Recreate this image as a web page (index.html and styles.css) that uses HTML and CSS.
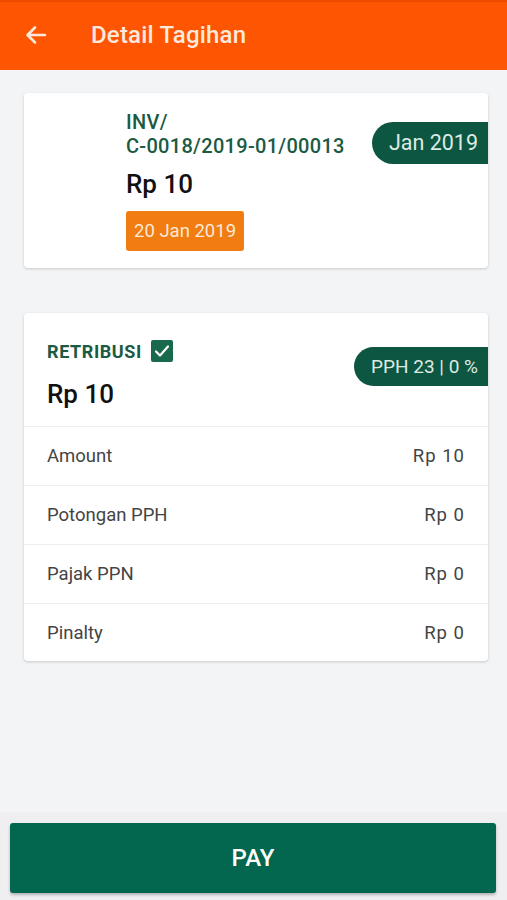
FILE: index.html
```html
<!DOCTYPE html>
<html lang="id">
<head>
    <meta charset="UTF-8">
    <meta name="viewport" content="width=device-width, initial-scale=1.0">
    <title>Detail Tagihan</title>
    <link rel="stylesheet" href="styles.css">
</head>
<body>
    <header class="app-bar">
        <svg class="back" width="22" height="20" viewBox="0 0 22 20">
            <path d="M20 10H3M10 2.5L2.5 10L10 17.5" fill="none" stroke="#fde9dc" stroke-width="2.6" stroke-linecap="round" stroke-linejoin="round"/>
        </svg>
        <h1>Detail Tagihan</h1>
    </header>

    <main class="content">
        <div class="card invoice-card">
            <div class="invoice-info">
                <div class="invoice-no">INV/<br>C-0018/2019-01/00013</div>
                <div class="amount">Rp 10</div>
                <span class="due-badge">20 Jan 2019</span>
            </div>
            <span class="pill period-pill">Jan 2019</span>
        </div>

        <div class="card detail-card">
            <div class="detail-head">
                <div>
                    <div class="type-row">
                        <span class="type-label">RETRIBUSI</span>
                        <span class="check">
                            <svg width="16" height="14" viewBox="0 0 16 14">
                                <path d="M2 7.5L6 11.5L14 2.5" fill="none" stroke="#fff" stroke-width="2.2" stroke-linecap="round" stroke-linejoin="round"/>
                            </svg>
                        </span>
                    </div>
                    <div class="amount">Rp 10</div>
                </div>
                <span class="pill tax-pill">PPH 23 | 0 %</span>
            </div>
            <div class="detail-row"><span>Amount</span><span class="value">Rp 10</span></div>
            <div class="detail-row"><span>Potongan PPH</span><span class="value">Rp 0</span></div>
            <div class="detail-row"><span>Pajak PPN</span><span class="value">Rp 0</span></div>
            <div class="detail-row"><span>Pinalty</span><span class="value">Rp 0</span></div>
        </div>
    </main>

    <footer class="bottom-bar">
        <button class="pay-btn">PAY</button>
    </footer>
</body>
</html>
```

FILE: styles.css
```css
body {
    margin: 0;
    font-family: Roboto, 'Noto Sans', sans-serif;
    background-color: #f2f4f5;
    width: 507px;
    height: 900px;
    display: flex;
    flex-direction: column;
    overflow: hidden;
}
.app-bar {
    height: 70px;
    background-color: #fe5502; /* Orange */
    display: flex;
    align-items: center;
    padding-left: 25px;
    box-sizing: border-box;
    border-top: 2px solid #f04a00;
}
.back {
    margin-top: -3px;
}
.app-bar h1 {
    margin: -3px 0 0 44px;
    font-size: 24px;
    font-weight: 500;
    letter-spacing: 0.2px;
    color: #fde9dc;
}
.content {
    flex: 1;
    padding: 23px 19px 0 24px;
    display: flex;
    flex-direction: column;
    gap: 45px;
}
.card {
    background-color: #fff;
    border-radius: 4px;
    box-shadow: 0 1px 3px rgba(0, 0, 0, 0.18);
    overflow: hidden;
}
.invoice-card {
    height: 175px;
    box-sizing: border-box;
    display: flex;
    justify-content: space-between;
    align-items: flex-start;
    padding: 17px 0 0 102px;
}
.invoice-info {
    display: flex;
    flex-direction: column;
    align-items: flex-start;
}
.invoice-no {
    font-size: 20px;
    font-weight: 500;
    letter-spacing: 0.3px;
    color: #1c5a43; /* Dark Green */
    line-height: 24px;
}
.amount {
    font-size: 26px;
    font-weight: 500;
    color: #111;
    margin-top: 11px;
    line-height: 30px;
}
.due-badge {
    margin-top: 12px;
    background-color: #f07c12;
    color: #fde9d6;
    font-size: 18.5px;
    padding: 0 8px;
    height: 40px;
    line-height: 40px;
    border-radius: 3px;
}
.pill {
    background-color: #0d5641;
    color: #dcebe4;
    border-radius: 22px 0 0 22px;
    white-space: nowrap;
}
.period-pill {
    margin-top: 12px;
    height: 42px;
    line-height: 42px;
    font-size: 21.5px;
    padding: 0 10px 0 17px;
}
.detail-head {
    display: flex;
    justify-content: space-between;
    align-items: flex-start;
    padding: 27px 0 17px 23px;
    border-bottom: 1px solid #eeeeee;
}
.type-row {
    display: flex;
    align-items: center;
    gap: 9px;
}
.type-label {
    font-size: 18px;
    font-weight: 700;
    letter-spacing: 0.6px;
    color: #1c5a43;
}
.check {
    width: 22px;
    height: 22px;
    border-radius: 2px;
    background-color: #196a4d;
    display: flex;
    align-items: center;
    justify-content: center;
}
.detail-head .amount {
    margin-top: 17px;
}
.tax-pill {
    margin-top: 7px;
    height: 39px;
    line-height: 39px;
    font-size: 19px;
    padding: 0 10px 0 17px;
}
.detail-row {
    display: flex;
    justify-content: space-between;
    align-items: center;
    height: 58px;
    padding: 0 24px 0 23px;
    font-size: 18.5px;
    color: #444;
    border-bottom: 1px solid #eeeeee;
}
.detail-row:last-child {
    border-bottom: none;
    height: 57px;
}
.value {
    letter-spacing: 1px;
    margin-right: -1px;
}
.bottom-bar {
    height: 88px;
    background-color: #efeff1;
    padding: 11px 11px 0 10px;
    box-sizing: border-box;
}
.pay-btn {
    width: 100%;
    height: 70px;
    border: none;
    border-radius: 3px;
    background-color: #02674e;
    color: #fff;
    font-family: Roboto, sans-serif;
    font-size: 24px;
    font-weight: 500;
    box-shadow: 0 2px 3px rgba(0, 0, 0, 0.25);
}
```
